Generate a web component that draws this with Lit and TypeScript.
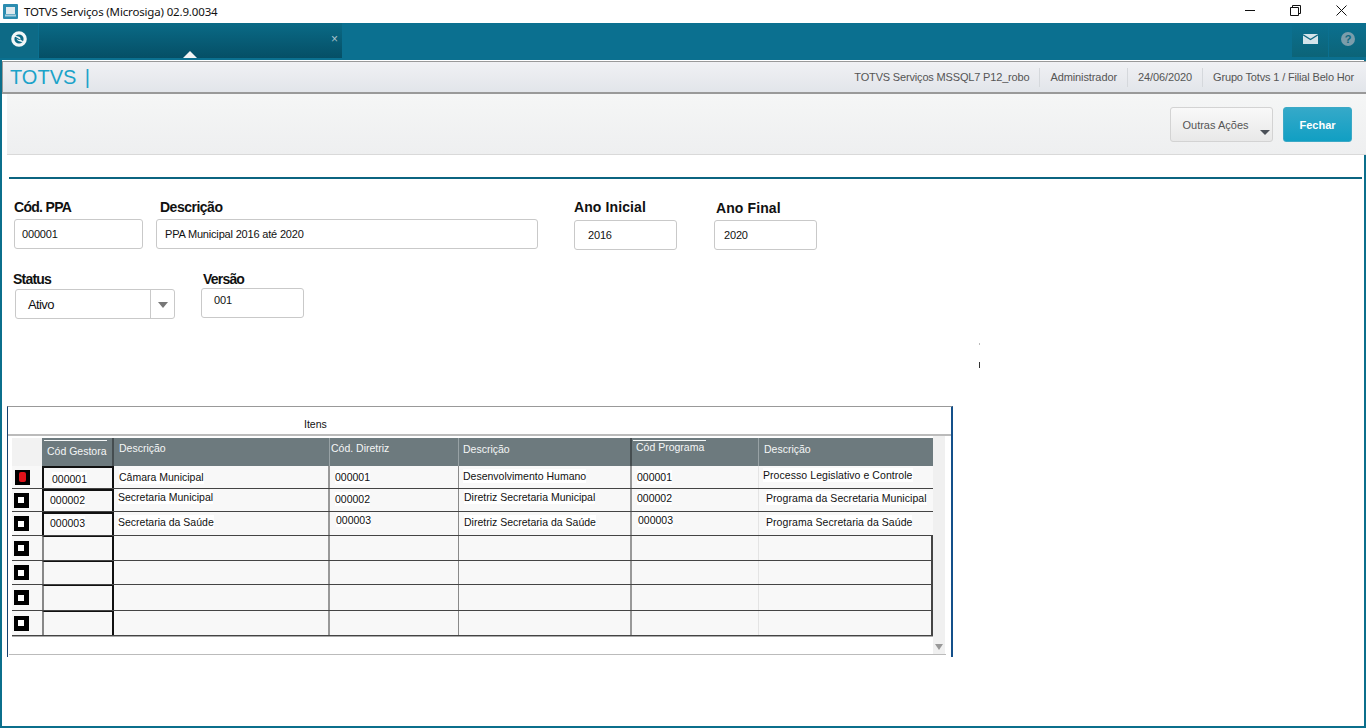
import { LitElement, html, css, svg } from "lit";
import { customElement } from "lit/decorators.js";

type Cell = { t: string; x: number; y: number };
const HEAD = [
  { t: "", cls: "blank", x: 0, y: 0 },
  { t: "Cód Gestora", cls: "over ovg", x: 2, y: 2 },
  { t: "Descrição", cls: "", x: 5, y: 4 },
  { t: "Cód. Diretriz", cls: "", x: 1, y: 4 },
  { t: "Descrição", cls: "", x: 4, y: 5 },
  { t: "Cód Programa", cls: "over", x: 1, y: 2 },
  { t: "Descrição", cls: "", x: 5, y: 5 },
];
const ROWS: { h: number; red?: boolean; cells: Cell[] }[] = [
  { h: 23, red: true, cells: [{ t: "000001", x: 8, y: 4 }, { t: "Câmara Municipal", x: 5, y: 4 }, { t: "000001", x: 5, y: 4 }, { t: "Desenvolvimento Humano", x: 4, y: 3 }, { t: "000001", x: 5, y: 4 }, { t: "Processo Legislativo e Controle", x: 4, y: 2 }] },
  { h: 23, cells: [{ t: "000002", x: 6, y: 2 }, { t: "Secretaria Municipal", x: 4, y: 1 }, { t: "000002", x: 5, y: 3 }, { t: "Diretriz Secretaria Municipal", x: 5, y: 1 }, { t: "000002", x: 5, y: 2 }, { t: "Programa da Secretaria Municipal", x: 7, y: 2 }] },
  { h: 24, cells: [{ t: "000003", x: 6, y: 2 }, { t: "Secretaria da Saúde", x: 4, y: 3 }, { t: "000003", x: 6, y: 1 }, { t: "Diretriz Secretaria da Saúde", x: 5, y: 3 }, { t: "000003", x: 6, y: 1 }, { t: "Programa Secretaria da Saúde", x: 7, y: 3 }] },
  { h: 25, cells: [] },
  { h: 24, cells: [] },
  { h: 26, cells: [] },
  { h: 25, cells: [] },
];

@customElement("app-root")
export class AppRoot extends LitElement {
  static styles = css`
    :host { display: block; width: 1366px; height: 728px; background: #fff; font-family: "Liberation Sans", Arial, sans-serif; color: #111; overflow: hidden; position: relative; }
    * { box-sizing: border-box; }
    .win { height: 728px; display: flex; flex-direction: column; border-left: 2px solid #0b6f8c; border-right: 2px solid #0b6f8c; border-bottom: 2px solid #0b6f8c; }
    .title { height: 23px; margin: 0 -2px; background: #fff; display: flex; align-items: center; padding-left: 3px; font-family: "Noto Sans", "Open Sans", sans-serif; color: #111; flex: none; }
    .title .ttl { margin-left: 6px; font-size: 11.5px; letter-spacing: -.16px; }
    .wbtns { margin-left: auto; display: flex; margin-right: 2px; padding-bottom: 2px; }
    .wbtns span { width: 45.5px; height: 21px; display: flex; align-items: center; justify-content: center; }
    .top { height: 37px; margin: 0 -2px; background: #0b7090; display: flex; flex: none; }
    .home { width: 38px; height: 35px; background: #0d6a86; display: flex; align-items: center; justify-content: center; padding-bottom: 3px; }
    .tab { width: 303px; height: 35px; margin-left: 1px; background: linear-gradient(#0a6a86, #054f66); position: relative; }
    .tab .x { position: absolute; right: 4px; top: 10px; color: #a9c4cd; font-size: 12px; line-height: 12px; }
    .tab .tri { position: absolute; left: 144px; bottom: 0; width: 0; height: 0; border-left: 7px solid transparent; border-right: 7px solid transparent; border-bottom: 7px solid #f2f4f5; }
    .tools { margin-left: auto; display: flex; }
    .tool { width: 36px; height: 34px; background: linear-gradient(#0b7090, #0c6478); margin-left: 1px; display: flex; align-items: center; justify-content: center; padding-bottom: 3px; }
    .tool.last { width: 37px; }
    .hdr { height: 33px; margin: 1px -2px 0 0; background: linear-gradient(#f0f1f4, #e2e5ea); border-top: 1px solid #999; border-bottom: 2px solid #999; border-left: 1px solid #999; display: flex; align-items: center; flex: none; }
    .logo { font-size: 20px; color: #1ba3c9; padding: 0 0 1px 7px; line-height: 26px; word-spacing: 3px; }
    .meta { margin-left: auto; display: flex; align-items: center; font-size: 11px; color: #555; letter-spacing: -.1px; }
    .meta span { height: 19px; line-height: 19px; padding: 0 10px; border-left: 1px solid #d5d8dc; white-space: nowrap; }
    .meta span:first-child { border-left: none; letter-spacing: -.17px; }
    .meta span:last-child { padding: 0 12px 0 10px; letter-spacing: -.16px; }
    .bar { height: 61px; margin-left: 5px; margin-right: -2px; background: linear-gradient(#f5f6f6, #eeeff0); border-bottom: 1px solid #d9d9d9; display: flex; align-items: flex-start; justify-content: flex-end; padding: 13px 14px 0 0; flex: none; }
    .btn { height: 35px; border-radius: 3px; font-size: 11px; display: flex; align-items: center; justify-content: center; }
    .more { width: 103px; background: linear-gradient(#f9f9f9, #e8e8e8); border: 1px solid #d3d3d3; color: #555; padding-right: 12px; position: relative; }
    .more i { position: absolute; right: 2px; bottom: 6px; border-left: 5px solid transparent; border-right: 5px solid transparent; border-top: 5px solid #4b5058; }
    .close { width: 69px; margin-left: 10px; background: linear-gradient(#35a9c9, #119fc3); border: 1px solid #3ba9c6; color: #fff; font-weight: bold; }
    .rule { height: 2px; background: #0b6480; margin: 22px 2px 0 7px; flex: none; }
    .form { height: 227px; flex: none; display: flex; flex-direction: column; }
    .frow { display: flex; align-items: flex-start; }
    .r1 { height: 105px; }
    .field { display: flex; flex-direction: column; flex: none; }
    label { font-weight: bold; font-size: 14px; line-height: 16px; color: #111; display: block; }
    .box { height: 30px; border: 1px solid #c9c9c9; border-radius: 3px; background: #fff; font-size: 11px; letter-spacing: -.18px; display: flex; align-items: center; padding-left: 7px; }
    .f1 { margin: 20px 0 0 12px; width: 129px; }
    .f1 label { margin-bottom: 4px; letter-spacing: -.7px; }
    .f2 { margin: 20px 0 0 13px; width: 382px; }
    .f2 label { padding-left: 4px; margin-bottom: 4px; letter-spacing: -.5px; }
    .f2 .box { padding-left: 8px; }
    .f3 { margin: 20px 0 0 36px; width: 103px; }
    .f3 label { margin-bottom: 5px; letter-spacing: .1px; }
    .f3 .box { padding-left: 13px; }
    .f4 { margin: 21px 0 0 37px; width: 103px; }
    .f4 label { margin-bottom: 4px; padding-left: 2px; letter-spacing: .1px; }
    .f4 .box { padding-left: 9px; }
    .f5 { margin: -13px 0 0 11px; width: 162px; }
    .f5 label { margin-bottom: 2px; letter-spacing: -.8px; }
    .f5 .box { margin-left: 2px; width: 160px; font-size: 13px; padding-left: 12px; position: relative; letter-spacing: -.6px; }
    .f5 .box::after { content: ""; position: absolute; right: 23px; top: 0; bottom: 0; border-left: 1px solid #c9c9c9; }
    .f5 .box i { position: absolute; right: 6px; top: 12px; border-left: 5px solid transparent; border-right: 5px solid transparent; border-top: 6px solid #777; }
    .f6 { margin: -13px 0 0 26px; width: 103px; }
    .f6 label { margin-bottom: 1px; padding-left: 2px; letter-spacing: -.8px; }
    .f6 .box { padding: 0 0 6px 12px; }
    .tick { position: absolute; left: 979px; top: 343px; width: 1px; height: 25px; background: linear-gradient(#bbb 0 6%, transparent 6% 76%, #333 76%); }
    .tblwrap { flex: none; height: 251px; width: 946px; margin-left: 5px; border-top: 1px solid #999; border-left: 1px solid #14406e; border-right: 2px solid #14508a; display: flex; flex-direction: column; position: relative; }
    .cap { height: 29px; flex: none; border-bottom: 2px solid #bbb; font-size: 10.5px; padding: 10px 0 0 296px; line-height: 14px; color: #111; }
    .body { display: flex; flex: none; height: 219px; }
    .grid { width: 921px; margin: 2px 0 0 4px; flex: none; }
    .row, .thead { display: grid; grid-template-columns: 30px 72px 216px 129px 173px 127px 174px; }
    .row { background: #f8f8f8; border-bottom: 1px solid #444; box-shadow: 0 1px 0 #aaa; position: relative; }
    .thead { height: 28px; background: #6d7a7e; }
    .th { color: #f4f6f6; font-size: 10.5px; white-space: nowrap; border-right: 1px solid #98a2a5; }
    .th:nth-child(2), .th:nth-child(5) { border-right: 2px solid #454d50; }
    .th:last-child { border-right: 0; }
    .th span { display: block; }
    .th.over span { display: inline-block; border-top: 1px solid #f4f6f6; padding: 0 2px 0 3px; }
    .th.ovg span { padding: 4px 0 0 3px; }
    .th.blank { background: #f2f2f2; border-right: 0; }
    .td { font-size: 10.5px; white-space: nowrap; color: #111; }
    .td:nth-child(3), .td:nth-child(5) { border-right: 2px solid #999; }
    .td:nth-child(4) { border-right: 1px solid #8a8a8a; }
    .td:nth-child(6) { border-right: 1px solid #e4e4e4; }
    .td:nth-child(7) { border-right: 2px solid #444; letter-spacing: .06px; }
    .td.filled:nth-child(7) { border-right-color: transparent; }
    .td span { display: inline-block; background: #fff; line-height: 14px; }
    .chk { display: flex; align-items: center; justify-content: center; padding-right: 12px; }
    .sq { width: 15px; height: 15px; background: #000; display: flex; align-items: center; justify-content: center; }
    .sq b { width: 6px; height: 6px; background: #fff; display: block; }
    .sq.red { margin-left: 3px; }
    .sq.red b { width: 7px; height: 10px; background: #e0121a; border-radius: 2px; }
    .code { border: 2px solid #111; border-bottom: none; }
    .code.empty { border-left-color: #888; border-top-width: 1px; }
    .scroll { width: 12px; flex: none; background: #f0f0f0; position: relative; }
    .scroll i { position: absolute; left: 2px; bottom: 5px; border-left: 4px solid transparent; border-right: 4px solid transparent; border-top: 6px solid #999; }
    .foot { position: absolute; left: 1px; right: 5px; top: 247px; height: 1px; background: #bbb; }
    .fill { flex: 1; }
  `;

  private cols() { return [1, 2, 3, 4, 5, 6]; }

  render() {
    const logo = svg`<circle cx="8" cy="8" r="6.2" fill="none" stroke="#f4f7f8" stroke-width="3.2"/><path d="M3.5 5.2 C6 4.8 10 6 9.5 8.2 C9.2 9.5 6.5 8.8 5.5 7.6 C6 10.5 10.5 11.5 12.6 10.6" fill="#f4f7f8"/>`;
    return html`
      <div class="win">
        <div class="title">
          <svg width="15" height="15" viewBox="0 0 15 15"><rect width="15" height="15" rx="1" fill="#2b8cb0"/><rect x="3" y="3" width="9" height="7" fill="#dfe9ee"/><rect x="2" y="10.5" width="11" height="2" fill="#a8cfdf"/></svg>
          <span class="ttl">TOTVS Serviços (Microsiga) 02.9.0034</span>
          <div class="wbtns">
            <span><svg width="11" height="11"><path d="M0 5.5H10" stroke="#111"/></svg></span>
            <span><svg width="11" height="11" viewBox="0 0 11 11"><path d="M.5 2.5H8.5V10.5H.5Z M2.5 2.5V.5H10.5V8.5H8.5" fill="none" stroke="#111"/></svg></span>
            <span><svg width="11" height="11" viewBox="0 0 11 11"><path d="M.5 .5L10.5 10.5M10.5 .5L.5 10.5" stroke="#111"/></svg></span>
          </div>
        </div>
        <div class="top">
          <div class="home"><svg width="16" height="16" viewBox="0 0 16 16">${logo}</svg></div>
          <div class="tab"><span class="x">×</span><span class="tri"></span></div>
          <div class="tools">
            <div class="tool"><svg width="15" height="10" viewBox="0 0 15 10"><path d="M0 0H15V10H0Z" fill="#d5e4ea"/><path d="M0 .8L7.5 5.6L15 .8" fill="none" stroke="#0c6780" stroke-width="1.2"/></svg></div>
            <div class="tool last"><svg width="14" height="14" viewBox="0 0 14 14"><circle cx="7" cy="7" r="7" fill="#7b9dab"/><text x="7" y="11" text-anchor="middle" font-size="11" font-weight="bold" font-family="Liberation Sans" fill="#0c6780">?</text></svg></div>
          </div>
        </div>
        <div class="hdr">
          <div class="logo">TOTVS |</div>
          <div class="meta">
            <span>TOTVS Serviços MSSQL7 P12_robo</span><span>Administrador</span><span>24/06/2020</span><span>Grupo Totvs 1 / Filial Belo Hor</span>
          </div>
        </div>
        <div class="bar">
          <div class="btn more">Outras Ações<i></i></div>
          <div class="btn close">Fechar</div>
        </div>
        <div class="rule"></div>
        <div class="form">
          <div class="frow r1">
            <div class="field f1"><label>Cód. PPA</label><div class="box">000001</div></div>
            <div class="field f2"><label>Descrição</label><div class="box">PPA Municipal 2016 até 2020</div></div>
            <div class="field f3"><label>Ano Inicial</label><div class="box">2016</div></div>
            <div class="field f4"><label>Ano Final</label><div class="box">2020</div></div>
          </div>
          <div class="frow">
            <div class="field f5"><label>Status</label><div class="box">Ativo<i></i></div></div>
            <div class="field f6"><label>Versão</label><div class="box">001</div></div>
          </div>
        </div>
        <div class="tick"></div>
        <div class="tblwrap">
          <div class="cap">Itens</div>
          <div class="body">
            <div class="grid">
              <div class="thead">
                ${HEAD.map(h => html`<div class="th ${h.cls}" style="padding:${h.y}px 0 0 ${h.x}px"><span>${h.t}</span></div>`)}
              </div>
              ${ROWS.map(r => html`
                <div class="row" style="height:${r.h}px">
                  <div class="td chk"><div class="sq ${r.red ? "red" : ""}"><b></b></div></div>
                  ${this.cols().map(i => {
                    const c = r.cells[i - 1];
                    return html`<div class="td ${c ? "filled" : ""} ${i === 1 ? (c ? "code" : "code empty") : ""}" style=${c ? `padding:${c.y}px 0 0 ${c.x}px` : ""}>${c ? html`<span>${c.t}</span>` : ""}</div>`;
                  })}
                </div>`)}
            </div>
            <div class="scroll"><i></i></div>
          </div>
          <div class="foot"></div>
        </div>
        <div class="fill"></div>
      </div>
    `;
  }
}
